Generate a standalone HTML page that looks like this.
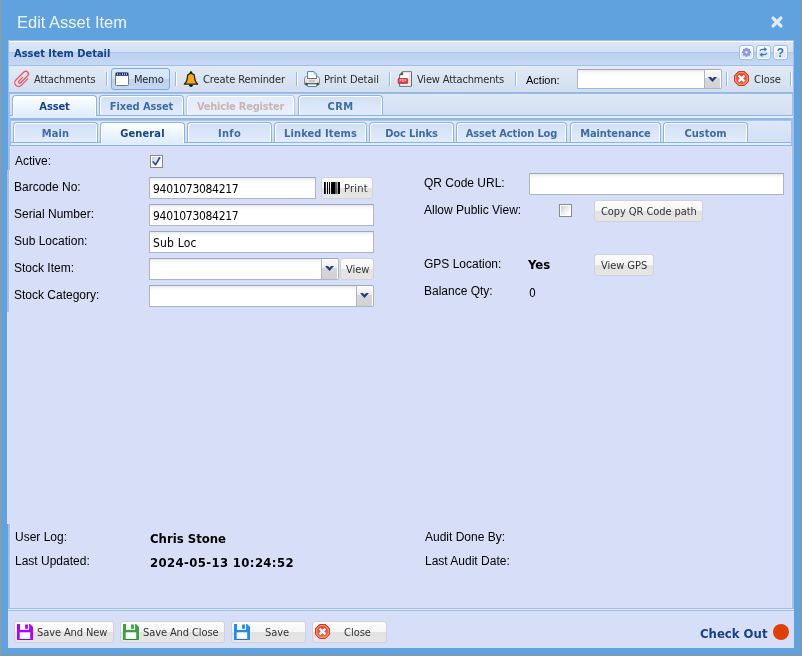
<!DOCTYPE html>
<html><head><meta charset="utf-8"><title>Edit Asset Item</title>
<style>
*{box-sizing:border-box;margin:0;padding:0}
html,body{width:802px;height:656px;overflow:hidden}
body{background:#5fa2dd;position:relative;font-family:"DejaVu Sans Condensed","Liberation Sans",sans-serif;font-size:11px;color:#222}
.a{position:absolute}
.t{position:absolute;white-space:nowrap;line-height:14px;height:14px}
.title{left:17px;top:12px;font:16.5px/20px "Liberation Sans",sans-serif;color:#eef3f9}
.ptitle{left:14px;top:47px;font:bold 11px/14px "DejaVu Sans Condensed","Liberation Sans",sans-serif;color:#15428b}
.tb{font:11px/14px "DejaVu Sans Condensed","Liberation Sans",sans-serif;color:#2a2a2a;letter-spacing:-0.12px}
.sep{position:absolute;width:2px;height:14px;top:72px;border-left:1px solid #8fbaf5;border-right:1px solid #fff}
.tab{position:absolute;height:20px;border:1px solid #8db2e3;border-bottom:none;border-radius:4px 4px 0 0;background:linear-gradient(#cfdff5 0,#d9e6f8 45%,#e0ecfc 100%);box-shadow:inset 1px 1px 0 #fff,inset -1px 0 0 #fff;text-align:center;font:bold 11px/14px "DejaVu Sans Condensed","Liberation Sans",sans-serif;color:#416aa3;padding-top:4px;white-space:nowrap;letter-spacing:-.12px}
.tab.act{height:21px;background:linear-gradient(#fff 0,#f3f8ff 35%,#deecfd 100%);color:#15428b}
.tab.dis{color:#c9b4b4;border-color:#b3cbee;letter-spacing:-.22px;background:linear-gradient(#e3ecfa 0,#e9f0fb 100%)}
.lbl{position:absolute;white-space:nowrap;font:12px/15px "Liberation Sans",sans-serif;color:#000}
.inp{position:absolute;height:22px;background:linear-gradient(#e4e8e8 0,#f6f8f8 2px,#fff 5px);border:1px solid #b0b4c8;border-top-color:#a2a6ba;font:12px/18px "DejaVu Sans Condensed","Liberation Sans",sans-serif;letter-spacing:-0.3px;color:#000;padding:2px 0 0 3px;white-space:nowrap;overflow:hidden}
.trig{position:absolute;width:18px;height:22px;border:1px solid #b0b4c8;border-top-color:#a2a6ba;background:linear-gradient(#fafafa 0,#efefef 45%,#d6d6d6 46%,#d2d2d2 100%);box-shadow:inset -1px 1px 0 #fff;border-radius:0 2px 2px 0}
.btn{position:absolute;height:22px;border:1px solid #d0d2d8;border-radius:3px;background:linear-gradient(#fcfcfc 0,#f6f6f6 50%,#e2e2e2 51%,#e6e6e6 100%)}
.bt{font:11px/14px "DejaVu Sans Condensed","Liberation Sans",sans-serif;color:#333;letter-spacing:-0.05px}
.b13{position:absolute;white-space:nowrap;font:bold 13px/16px "DejaVu Sans Condensed","Liberation Sans",sans-serif;color:#000}
.chk{position:absolute;width:13px;height:13px;border:1px solid #8a8a8a;background:linear-gradient(135deg,#c4c8cc 0,#e8eaec 45%,#fff 80%);box-shadow:inset 0 0 0 1px #fff}
.tool{position:absolute;width:15px;height:15px;top:45px;border:1px solid #9dbde8;border-radius:3px;background:linear-gradient(#f4f9ff 0,#ebf3fd 45%,#d7e6f9 46%,#ddeafa 100%);box-shadow:inset 0 0 0 1px #fff}
svg{position:absolute;overflow:visible}
</style></head><body><div id="w" style="position:absolute;left:0;top:0;width:802px;height:656px;will-change:transform">
<div class="a" style="left:0px;top:0px;width:1px;height:656px;background:#9a9794;"></div>
<div class="a" style="left:801px;top:0px;width:1px;height:656px;background:#8e8c90;"></div>
<div class="a" style="left:0px;top:655px;width:802px;height:1px;background:#96928f;"></div>
<div class="t title">Edit Asset Item</div>
<svg style="left:771px;top:16px" width="12" height="12" viewBox="0 0 12 12"><path d="M2.1 2.1 L9.9 9.9 M9.9 2.1 L2.1 9.9" stroke="#e3edf8" stroke-width="3.3" stroke-linecap="round"/></svg>
<div class="a" style="left:8px;top:40px;width:786px;height:608px;background:#a0bfe9;"></div>
<div class="a" style="left:9px;top:41px;width:784px;height:1px;background:#fff;"></div>
<div class="a" style="left:9px;top:42px;width:784px;height:10px;background:linear-gradient(#dbe7f6,#d3e1f4);"></div>
<div class="a" style="left:9px;top:52px;width:784px;height:1px;background:#adc8ec;"></div>
<div class="a" style="left:9px;top:53px;width:784px;height:12px;background:linear-gradient(#bad0ef,#c6d9f2);"></div>
<div class="t ptitle">Asset Item Detail</div>
<div class="a" style="left:9px;top:66px;width:784px;height:26px;background:linear-gradient(#e3ebf7 0,#dce6f4 30%,#d2dff0 100%);"></div>
<div class="a" style="left:9px;top:92px;width:784px;height:1px;background:#93b7e6;"></div>
<div class="a" style="left:9px;top:93px;width:784px;height:1px;background:#9dbce8;"></div>
<div class="a" style="left:10px;top:94px;width:782px;height:21px;background:linear-gradient(#dde8f6 0,#d3e0f3 100%);"></div>
<div class="a" style="left:10px;top:115px;width:782px;height:1px;background:#8db2e3;"></div>
<div class="a" style="left:10px;top:116px;width:783px;height:2px;background:#e1edfd;"></div>
<div class="a" style="left:9px;top:118px;width:784px;height:2px;background:#93b7e6;"></div>
<div class="a" style="left:9px;top:120px;width:784px;height:1px;background:#a9c5ec;"></div>
<div class="a" style="left:8px;top:118px;width:3px;height:30px;background:#a0bfe9;"></div>
<div class="a" style="left:791px;top:118px;width:3px;height:30px;background:#a0bfe9;"></div>
<div class="a" style="left:11px;top:121px;width:780px;height:21px;background:linear-gradient(#dde8f6 0,#d3e0f3 100%);"></div>
<div class="a" style="left:11px;top:142px;width:780px;height:1px;background:#8db2e3;"></div>
<div class="a" style="left:11px;top:143px;width:780px;height:2px;background:#e1edfd;"></div>
<div class="a" style="left:10px;top:145px;width:782px;height:1px;background:#8db2e3;"></div>
<div class="a" style="left:10px;top:146px;width:782px;height:462px;background:#d6dff7;"></div>
<div class="a" style="left:10px;top:146px;width:1px;height:462px;background:#dfe5fa;"></div>
<div class="a" style="left:791px;top:146px;width:1px;height:462px;background:#dde3f9;"></div>
<div class="a" style="left:9px;top:608px;width:784px;height:1px;background:#a0bfe9;"></div>
<div class="a" style="left:8px;top:609px;width:786px;height:1px;background:#dfe7fa;"></div>
<div class="a" style="left:8px;top:610px;width:786px;height:1px;background:#a0bfe9;"></div>
<div class="a" style="left:8px;top:611px;width:786px;height:37px;background:#d6dff7;"></div>
<div class="a" style="left:7px;top:170px;width:2px;height:142px;background:#a0bfe9;"></div>
<div class="a" style="left:9px;top:170px;width:1px;height:142px;background:#dfe5fa;"></div>
<div class="a" style="left:10px;top:170px;width:1px;height:354px;background:#d6dff7;"></div>
<div class="a" style="left:7px;top:312px;width:1px;height:212px;background:#dfe5fa;"></div>
<div class="a" style="left:8px;top:312px;width:2px;height:212px;background:#d6dff7;"></div>
<div class="tool" style="left:739px"></div>
<div class="tool" style="left:756px"></div>
<div class="tool" style="left:773px"></div>
<svg style="left:741px;top:47px" width="11" height="11" viewBox="-5.9 -5.7 11.8 11.8"><g fill="#8790cf"><circle r="3.5"/><rect x="-1.1" y="-4.8" width="2.2" height="9.6" rx=".5" transform="rotate(0)"/><rect x="-1.1" y="-4.8" width="2.2" height="9.6" rx=".5" transform="rotate(45)"/><rect x="-1.1" y="-4.8" width="2.2" height="9.6" rx=".5" transform="rotate(90)"/><rect x="-1.1" y="-4.8" width="2.2" height="9.6" rx=".5" transform="rotate(135)"/></g><circle r="1.3" fill="#e6ebf8"/><circle r="2.4" fill="none" stroke="#a9aee0" stroke-width=".6"/></svg>
<svg style="left:759.4px;top:47.2px" width="8.6" height="10" viewBox="0 0 11 11" preserveAspectRatio="none"><g fill="none" stroke="#3d72aa" stroke-width="1.4"><path d="M1.2 4.6 C1.6 2.9 3 2.6 4.6 2.6 L8 2.6"/><path d="M9.8 6.4 C9.4 8.1 8 8.4 6.4 8.4 L3 8.4"/></g><path d="M6.8 0 L10.2 2.6 L6.8 5.2 Z" fill="#3d72aa"/><path d="M4.2 5.8 L.8 8.4 L4.2 11 Z" fill="#3d72aa"/></svg>
<div class="t" style="left:773px;top:46px;width:15px;height:15px;text-align:center;font:bold 12px/15px 'Liberation Sans',sans-serif;color:#3d72aa">?</div>
<svg style="left:14px;top:71px" width="16" height="16" viewBox="0 0 16 16"><g transform="matrix(.7071 -.7071 .7071 .7071 0 0)"><path d="M4.1 15.3 L-5 15.3 A3.8 3.8 0 0 1 -5 7.7 L6.3 7.7 A2.65 2.65 0 0 1 6.3 13 L-3.7 13 A1.2 1.2 0 0 1 -3.7 10.6 L1.55 10.6" fill="none" stroke="#f0505a" stroke-width="1.25" stroke-linecap="round"/></g></svg>
<div class="t tb" style="left:34px;top:73px;letter-spacing:-.16px">Attachments</div>
<div class="sep" style="left:106px"></div>
<div class="a" style="left:111px;top:68px;width:59px;height:22px;border:1px solid #7fa8da;border-radius:3px;background:linear-gradient(#d9e9fc 0,#d2e4fa 48%,#bdd2ef 50%,#c3d6f1 100%)"></div>
<svg style="left:115px;top:72px" width="14" height="14" viewBox="0 0 14 14"><rect x=".5" y=".5" width="13" height="13" rx="1" fill="#fff" stroke="#767676"/><rect x="1" y="1" width="12" height="2.8" fill="#0f2a78"/><g fill="#e8ecf8"><rect x="2" y="1.2" width=".8" height="1.7"/><rect x="4" y="1.8" width="1.8" height=".7"/><rect x="7" y="1.2" width=".8" height="1.7"/><rect x="9" y="1.2" width=".8" height="1.7"/><rect x="11" y="1.2" width=".8" height="1.7"/></g></svg>
<div class="t tb" style="left:134px;top:73px;letter-spacing:-.2px">Memo</div>
<div class="sep" style="left:175px"></div>
<svg style="left:183px;top:71px" width="16" height="16" viewBox="0 0 16 16"><circle cx="8" cy="1.5" r="1.2" fill="#111"/><path d="M8 2.1 L5.1 3.6 C4.5 4.1 4.5 5 4.4 6.5 C4.2 9.5 3.7 11.2 1.3 13.2 L14.7 13.2 C12.3 11.2 11.8 9.5 11.6 6.5 C11.5 5 11.5 4.1 10.9 3.6 Z" fill="#f9a814" stroke="#242424" stroke-width="1.25" stroke-linejoin="round"/><path d="M5.9 13.8 A2.1 2.1 0 0 0 10.1 13.8 Z" fill="#080808"/></svg>
<div class="t tb" style="left:203px;top:73px;letter-spacing:-.11px">Create Reminder</div>
<div class="sep" style="left:296px"></div>
<svg style="left:304px;top:71px" width="16" height="16" viewBox="0 0 16 16"><defs><linearGradient id="pg" x1="0" y1="0" x2="0" y2="1"><stop offset="0" stop-color="#ffffff"/><stop offset=".55" stop-color="#dedede"/><stop offset="1" stop-color="#7a7a7a"/></linearGradient></defs><rect x=".5" y="5.6" width="15" height="8.8" rx="2.3" fill="url(#pg)" stroke="#808080" stroke-width=".9"/><path d="M1.3 12.3 Q8 11.2 14.7 12.3 L14.9 13.5 Q8 15.2 1.1 13.5 Z" fill="#2e2e2e"/><rect x="3.1" y="7.3" width="9.8" height="4.9" fill="#ededed"/><path d="M3.1 7.4 L12.9 7.4" stroke="#4a4a4a" stroke-width=".9"/><rect x="4.5" y="8.8" width="6.6" height="2.6" fill="#c6c6c6"/><path d="M3.6 7 L3.6 .6 L10 .6 L12.6 3.2 L12.6 7" fill="#fff" stroke="#3c82d2" stroke-width="1"/><path d="M10 .8 L10 3.2 L12.4 3.2 Z" fill="#eaf1fb" stroke="#5a93d6" stroke-width=".6"/><path d="M3.6 13.1 L3.6 15.5 L12.6 15.5 L12.6 13.1" fill="#fff" stroke="#3c82d2" stroke-width="1"/><path d="M4.1 13.1 L12.1 13.1" stroke="#9a9a9a" stroke-width=".7"/></svg>
<div class="t tb" style="left:324px;top:73px;letter-spacing:0">Print Detail</div>
<div class="sep" style="left:389px"></div>
<svg style="left:397px;top:71px" width="16" height="16" viewBox="0 0 16 16"><path d="M2.6 3.6 L5.6 .7 L14.5 .7 L14.5 15.3 L2.6 15.3 Z" fill="#fff" stroke="#6a6a6a" stroke-width="1" stroke-linejoin="round"/><rect x="11.6" y="1.4" width="2.3" height="13.2" fill="#e6e6e6"/><path d="M2.8 3.8 L5.7 3.8 L5.7 1" fill="#444" stroke="#333" stroke-width=".6"/><rect x="1.2" y="7.6" width="9.5" height="4.8" rx=".6" fill="#ea3640" stroke="#b42a2a" stroke-width=".8"/><path d="M1.2 7.6 L2.4 6.2 L2.4 7.6 Z" fill="#7a1418"/><text x="2.4" y="11.2" font-family="Liberation Sans, sans-serif" font-size="3.2" font-weight="bold" fill="#f7cccc" letter-spacing=".3">PDF</text></svg>
<div class="t tb" style="left:417px;top:73px;letter-spacing:-.17px">View Attachments</div>
<div class="sep" style="left:515px"></div>
<div class="t " style="left:526px;top:73px;font:11px/14px 'Liberation Sans',sans-serif;color:#000">Action:</div>
<div class="inp" style="left:577px;top:69px;width:128px;height:20px"></div>
<div class="trig" style="left:704px;top:69px;height:20px"></div>
<svg style="left:708px;top:77px" width="9" height="5" viewBox="0 0 9 5"><path d="M0 0 L3 0 L4.5 1.7 L6 0 L9 0 L4.5 5 Z" fill="#1c3a8a"/></svg>
<div class="sep" style="left:726px"></div>
<svg style="left:734px;top:71px" width="15" height="15" viewBox="0 0 15 15"><defs><linearGradient id="og1" x1="0" y1="0" x2="0" y2="1"><stop offset="0" stop-color="#e2401e"/><stop offset="1" stop-color="#f3694a"/></linearGradient></defs><path d="M4.4 .5 L10.6 .5 L14.5 4.4 L14.5 10.6 L10.6 14.5 L4.4 14.5 L.5 10.6 L.5 4.4 Z" fill="url(#og1)" stroke="#cf3a1e" stroke-width="1"/><path d="M4.9 1.7 L10.1 1.7 L13.3 4.9 L13.3 10.1 L10.1 13.3 L4.9 13.3 L1.7 10.1 L1.7 4.9 Z" fill="none" stroke="#f7ae9e" stroke-width=".9"/><path d="M4.6 4.6 L10.4 10.4 M10.4 4.6 L4.6 10.4" stroke="#fff" stroke-width="2.3"/></svg>
<div class="t tb" style="left:754px;top:73px;letter-spacing:0">Close</div>
<div class="sep" style="left:790px"></div>
<div class="tab act" style="left:12px;top:95px;width:85px">Asset</div>
<div class="tab " style="left:99px;top:95px;width:85px">Fixed Asset</div>
<div class="tab dis" style="left:186px;top:95px;width:109px">Vehicle Register</div>
<div class="tab " style="left:298px;top:95px;width:85px;letter-spacing:0.5px">CRM</div>
<div class="tab " style="left:13px;top:122px;width:85px;letter-spacing:0.1px">Main</div>
<div class="tab act" style="left:100px;top:122px;width:85px;letter-spacing:0.12px">General</div>
<div class="tab " style="left:187px;top:122px;width:85px;letter-spacing:0.28px">Info</div>
<div class="tab " style="left:274px;top:122px;width:93px;letter-spacing:0.1px">Linked Items</div>
<div class="tab " style="left:369px;top:122px;width:85px">Doc Links</div>
<div class="tab " style="left:456px;top:122px;width:111px">Asset Action Log</div>
<div class="tab " style="left:570px;top:122px;width:91px">Maintenance</div>
<div class="tab " style="left:663px;top:122px;width:85px;letter-spacing:0px">Custom</div>
<div class="lbl" style="left:15px;top:154px">Active:</div>
<div class="chk" style="left:150px;top:155px"></div>
<svg style="left:150px;top:155px" width="13" height="13" viewBox="0 0 13 13"><path d="M3.3 7 L5.6 9.6 L9.6 2.8" fill="none" stroke="#2b4a9c" stroke-width="1.7" stroke-linecap="round" stroke-linejoin="round"/></svg>
<div class="lbl" style="left:14px;top:180px">Barcode No:</div>
<div class="inp" style="left:149px;top:177px;width:167px">9401073084217</div>
<div class="btn" style="left:321px;top:177px;width:52px"></div>
<svg style="left:324px;top:182px" width="16" height="12" viewBox="0 0 16 12"><g fill="#000"><rect x="0" y="0" width="1.8" height="12"/><rect x="3" y="0" width="1" height="12"/><rect x="5" y="0" width="1" height="12"/><rect x="7" y="0" width="4.6" height="12"/><rect x="12.4" y="0" width=".9" height="12"/><rect x="14" y="0" width="2" height="12"/></g></svg>
<div class="t bt" style="left:344px;top:182px;letter-spacing:.2px">Print</div>
<div class="lbl" style="left:14px;top:207px">Serial Number:</div>
<div class="inp" style="left:149px;top:204px;width:225px">9401073084217</div>
<div class="lbl" style="left:14px;top:234px">Sub Location:</div>
<div class="inp" style="left:149px;top:231px;width:225px;letter-spacing:.2px">Sub Loc</div>
<div class="lbl" style="left:14px;top:261px">Stock Item:</div>
<div class="inp" style="left:149px;top:258px;width:173px"></div>
<div class="trig" style="left:321px;top:258px"></div>
<svg style="left:325px;top:266px" width="9" height="5" viewBox="0 0 9 5"><path d="M0 0 L3 0 L4.5 1.7 L6 0 L9 0 L4.5 5 Z" fill="#1c3a8a"/></svg>
<div class="btn" style="left:340px;top:258px;width:34px"></div>
<div class="t bt" style="left:346px;top:263px;letter-spacing:0">View</div>
<div class="lbl" style="left:14px;top:288px">Stock Category:</div>
<div class="inp" style="left:149px;top:285px;width:208px"></div>
<div class="trig" style="left:356px;top:285px"></div>
<svg style="left:360px;top:293px" width="9" height="5" viewBox="0 0 9 5"><path d="M0 0 L3 0 L4.5 1.7 L6 0 L9 0 L4.5 5 Z" fill="#1c3a8a"/></svg>
<div class="lbl" style="left:424px;top:176px">QR Code URL:</div>
<div class="inp" style="left:529px;top:173px;width:255px"></div>
<div class="lbl" style="left:424px;top:203px">Allow Public View:</div>
<div class="chk" style="left:559px;top:204px"></div>
<div class="btn" style="left:594px;top:200px;width:109px"></div>
<div class="t bt" style="left:601px;top:205px;letter-spacing:-.08px">Copy QR Code path</div>
<div class="lbl" style="left:424px;top:257px">GPS Location:</div>
<div class="b13" style="left:528px;top:257px">Yes</div>
<div class="btn" style="left:594px;top:254px;width:60px"></div>
<div class="t bt" style="left:601px;top:259px;">View GPS</div>
<div class="lbl" style="left:424px;top:284px">Balance Qty:</div>
<div class="t" style="left:529px;top:286px;font:12px/14px 'DejaVu Sans Condensed','Liberation Sans',sans-serif;color:#000">0</div>
<div class="lbl" style="left:15px;top:530px">User Log:</div>
<div class="b13" style="left:150px;top:531px">Chris Stone</div>
<div class="lbl" style="left:15px;top:554px">Last Updated:</div>
<div class="b13" style="left:150px;top:555px;letter-spacing:.36px">2024-05-13 10:24:52</div>
<div class="lbl" style="left:425px;top:530px">Audit Done By:</div>
<div class="lbl" style="left:425px;top:554px">Last Audit Date:</div>
<div class="btn" style="left:14px;top:621px;width:100px"></div>
<svg style="left:17px;top:624px" width="16" height="16" viewBox="0 0 16 16"><path d="M0 0 L13 0 L16 3 L16 16 L0 16 Z" fill="#b000ff"/><rect x="3" y="0" width="9.1" height="5.9" fill="#fbfbfb"/><rect x="8.1" y=".5" width="2.8" height="4.3" fill="#b000ff"/><rect x="2.7" y="8.3" width="10.5" height="6.7" fill="#fff"/><path d="M2.7 15.4 L13.2 15.4" stroke="#5a18c8" stroke-width=".8"/></svg>
<div class="t bt" style="left:37px;top:626px;letter-spacing:-.1px">Save And New</div>
<div class="btn" style="left:120px;top:621px;width:105px"></div>
<svg style="left:123px;top:624px" width="16" height="16" viewBox="0 0 16 16"><path d="M0 0 L13 0 L16 3 L16 16 L0 16 Z" fill="#3aa040"/><rect x="3" y="0" width="9.1" height="5.9" fill="#fbfbfb"/><rect x="8.1" y=".5" width="2.8" height="4.3" fill="#3aa040"/><rect x="2.7" y="8.3" width="10.5" height="6.7" fill="#fff"/><path d="M2.7 15.4 L13.2 15.4" stroke="#2a7a30" stroke-width=".8"/></svg>
<div class="t bt" style="left:143px;top:626px;letter-spacing:-.1px">Save And Close</div>
<div class="btn" style="left:231px;top:621px;width:75px"></div>
<svg style="left:234px;top:624px" width="16" height="16" viewBox="0 0 16 16"><path d="M0 0 L13 0 L16 3 L16 16 L0 16 Z" fill="#1e8cf0"/><rect x="3" y="0" width="9.1" height="5.9" fill="#fbfbfb"/><rect x="8.1" y=".5" width="2.8" height="4.3" fill="#1e8cf0"/><rect x="2.7" y="8.3" width="10.5" height="6.7" fill="#fff"/><path d="M2.7 15.4 L13.2 15.4" stroke="#1868c0" stroke-width=".8"/></svg>
<div class="t bt" style="left:265px;top:626px;letter-spacing:-.1px">Save</div>
<div class="btn" style="left:312px;top:621px;width:75px"></div>
<svg style="left:315px;top:624px" width="15" height="15" viewBox="0 0 15 15"><defs><linearGradient id="og2" x1="0" y1="0" x2="0" y2="1"><stop offset="0" stop-color="#e2401e"/><stop offset="1" stop-color="#f3694a"/></linearGradient></defs><path d="M4.4 .5 L10.6 .5 L14.5 4.4 L14.5 10.6 L10.6 14.5 L4.4 14.5 L.5 10.6 L.5 4.4 Z" fill="url(#og2)" stroke="#cf3a1e" stroke-width="1"/><path d="M4.9 1.7 L10.1 1.7 L13.3 4.9 L13.3 10.1 L10.1 13.3 L4.9 13.3 L1.7 10.1 L1.7 4.9 Z" fill="none" stroke="#f7ae9e" stroke-width=".9"/><path d="M4.6 4.6 L10.4 10.4 M10.4 4.6 L4.6 10.4" stroke="#fff" stroke-width="2.3"/></svg>
<div class="t bt" style="left:344px;top:626px;letter-spacing:0">Close</div>
<div class="b13" style="left:700px;top:626px;color:#15428b">Check Out</div>
<div class="a" style="left:773px;top:624px;width:16px;height:16px;border-radius:50%;background:#e03e04"></div>
</div></body></html>
